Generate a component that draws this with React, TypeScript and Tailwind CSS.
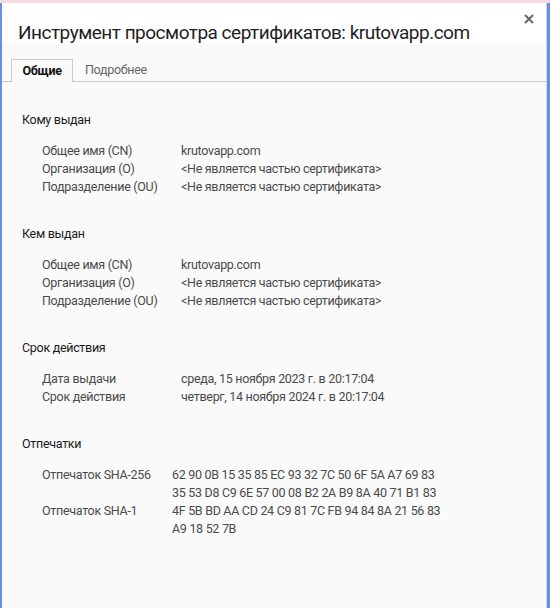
import React from "react";

type Row = { label: string; value: string[] };

const SECTIONS: { title: string; valueCol: string; rows: Row[] }[] = [
  {
    title: "Кому выдан",
    valueCol: "w-[139px]",
    rows: [
      { label: "Общее имя (CN)", value: ["krutovapp.com"] },
      { label: "Организация (O)", value: ["<Не является частью сертификата>"] },
      { label: "Подразделение (OU)", value: ["<Не является частью сертификата>"] },
    ],
  },
  {
    title: "Кем выдан",
    valueCol: "w-[139px]",
    rows: [
      { label: "Общее имя (CN)", value: ["krutovapp.com"] },
      { label: "Организация (O)", value: ["<Не является частью сертификата>"] },
      { label: "Подразделение (OU)", value: ["<Не является частью сертификата>"] },
    ],
  },
  {
    title: "Срок действия",
    valueCol: "w-[139px]",
    rows: [
      { label: "Дата выдачи", value: ["среда, 15 ноября 2023 г. в 20:17:04"] },
      { label: "Срок действия", value: ["четверг, 14 ноября 2024 г. в 20:17:04"] },
    ],
  },
  {
    title: "Отпечатки",
    valueCol: "w-[130px]",
    rows: [
      {
        label: "Отпечаток SHA-256",
        value: [
          "62 90 0B 15 35 85 EC 93 32 7C 50 6F 5A A7 69 83",
          "35 53 D8 C9 6E 57 00 08 B2 2A B9 8A 40 71 B1 83",
        ],
      },
      {
        label: "Отпечаток SHA-1",
        value: ["4F 5B BD AA CD 24 C9 81 7C FB 94 84 8A 21 56 83", "A9 18 52 7B"],
      },
    ],
  },
];

function Section({ title, valueCol, rows }: (typeof SECTIONS)[number]) {
  return (
    <section className="pb-[29px]">
      <h3 className="pl-[20px] text-[12.5px] leading-[18px] tracking-[-0.3px] text-[#1a1a1a]">{title}</h3>
      <div className="mt-[13px] flex flex-col">
        {rows.map((r) => (
          <div
            key={r.label}
            className="flex pl-[40px] text-[12.5px] leading-[18px] tracking-[-0.3px] text-[#4a4a4a]"
          >
            <div className={`${valueCol} shrink-0`}>{r.label}</div>
            <div className="flex flex-col">
              {r.value.map((v) => (
                <span key={v}>{v}</span>
              ))}
            </div>
          </div>
        ))}
      </div>
    </section>
  );
}

export default function App() {
  return (
    <div
      className="flex h-[608px] w-[550px] flex-col overflow-hidden bg-[#f6dcdc]"
      style={{ fontFamily: 'Roboto, "Noto Sans", sans-serif' }}
    >
      <div className="h-[3px] shrink-0" />
      <div className="flex flex-1">
        <div className="w-[2px] shrink-0 bg-[#6690e2]" />
        <div className="flex flex-1 flex-col">
          {/* header */}
          <div className="relative h-[41px] shrink-0 bg-white">
            <h1 className="pl-[16px] pt-[16px] text-[19px] leading-[28px] tracking-[-0.5px] text-[#1f1f1f]">
              Инструмент просмотра сертификатов: krutovapp.com
            </h1>
            <button className="absolute right-[10px] top-[9px] flex h-[14px] w-[14px] items-center justify-center text-[#666]">
              <svg width="10" height="10" viewBox="0 0 10 10" fill="none">
                <path d="M1 1L9 9M9 1L1 9" stroke="currentColor" strokeWidth="2" />
              </svg>
            </button>
          </div>
          {/* body */}
          <div className="flex flex-1 flex-col bg-[#fafafa]">
            <div className="mt-[15px] flex h-[23px] border-b border-[#c9c9c9] pl-[9px] text-[12.5px] tracking-[-0.3px]">
              <div className="relative -mb-px flex h-[23px] w-[62px] items-center justify-center border border-b-0 border-[#c9c9c9] bg-[#fafafa] font-bold text-[#111]">
                Общие
              </div>
              <div className="flex h-[22px] items-center pl-[12px] text-[#666]">Подробнее</div>
            </div>
            <div className="mt-[29px]">
              {SECTIONS.map((s) => (
                <Section key={s.title} {...s} />
              ))}
            </div>
          </div>
        </div>
        <div className="w-[1px] shrink-0 bg-[#d4d4d4]" />
        <div className="w-[3px] shrink-0 bg-[#6690e2]" />
      </div>
    </div>
  );
}
